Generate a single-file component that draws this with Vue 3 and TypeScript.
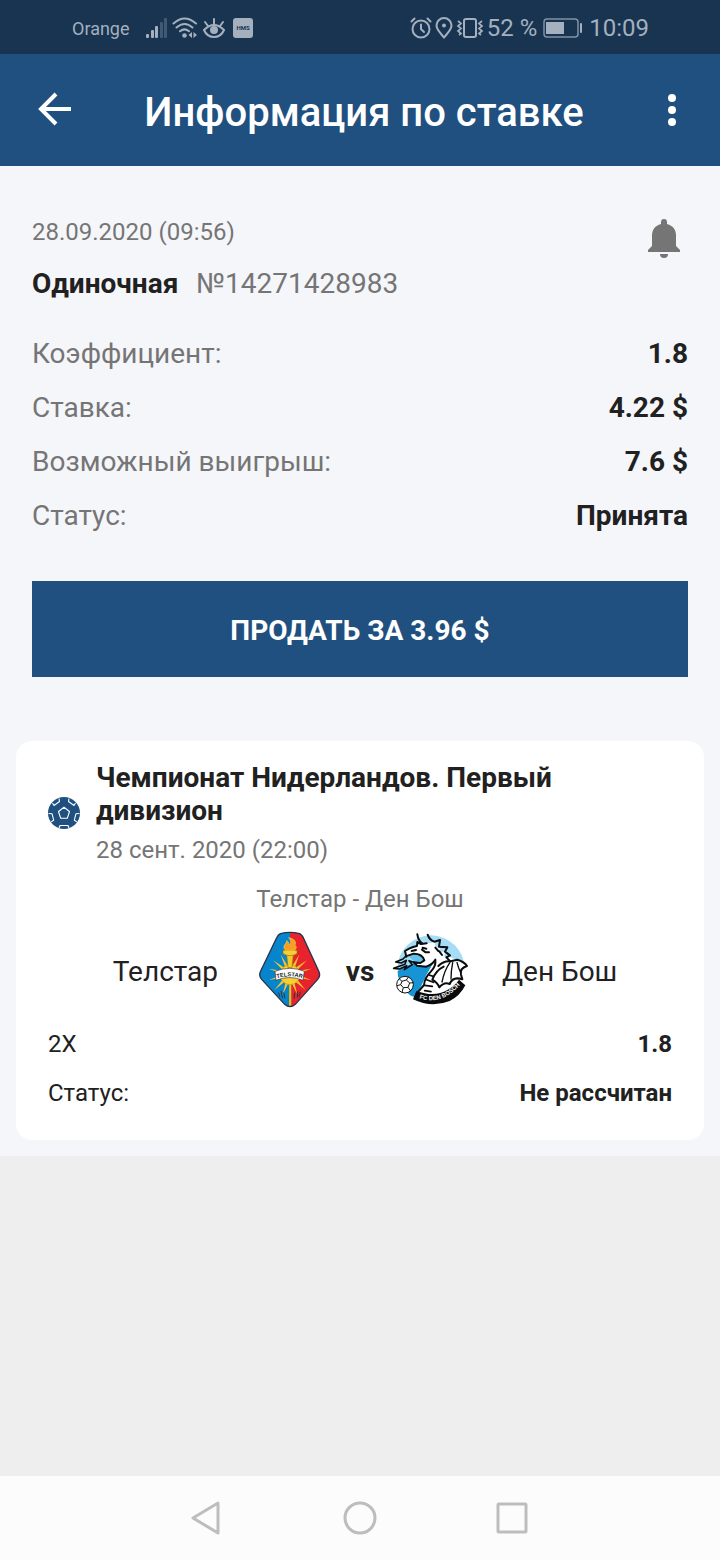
<script setup lang="ts">
interface Row {
  label: string
  value: string
}

const summary: Row[] = [
  { label: 'Коэффициент:', value: '1.8' },
  { label: 'Ставка:', value: '4.22 $' },
  { label: 'Возможный выигрыш:', value: '7.6 $' },
  { label: 'Статус:', value: 'Принята' },
]

const outcome: Row[] = [
  { label: '2X', value: '1.8' },
  { label: 'Статус:', value: 'Не рассчитан' },
]

const rays: number[] = [-75, -50, -25, 25, 50, 75, 105, 135, 160, 200, 225, 255]
</script>

<template>
  <div class="screen">
    <div class="status">
      <div class="status-group">
        <span class="carrier">Orange</span>
        <svg class="signal" width="22" height="22" viewBox="0 0 22 22" aria-hidden="true">
          <g fill="currentColor">
            <rect x="0" y="17" width="3" height="4" rx="1" />
            <rect x="5" y="13" width="3" height="8" rx="1" />
            <rect x="9" y="9" width="3" height="12" rx="1" />
            <g opacity=".3">
              <rect x="14" y="5" width="3" height="16" rx="1" />
              <rect x="18" y="1" width="3" height="20" rx="1" />
            </g>
          </g>
        </svg>
        <svg width="26" height="22" viewBox="0 0 26 22" aria-hidden="true">
          <g fill="none" stroke="currentColor" stroke-width="2" stroke-linecap="round">
            <path d="M1.500 6.500Q12.500-3.500 24 6.500M4.500 10.500Q12.500 3.500 20.500 10.500M8 14.300Q12.500 10.500 17 14.300" />
          </g>
          <circle cx="12.500" cy="18.500" r="2.300" fill="currentColor" />
          <path d="M20 15v6l-3.500-3zM21.500 15v6l3.500-3z" fill="currentColor" />
        </svg>
        <svg width="24" height="22" viewBox="0 0 24 22" aria-hidden="true">
          <g fill="none" stroke="currentColor" stroke-width="2" stroke-linecap="round">
            <path d="M2 13Q12 3 22 13Q19 20 12 20Q5 20 2 13z" />
            <path d="M12 2v5M3 5l3 4M21 5l-3 4" />
          </g>
          <circle cx="12" cy="13" r="4" fill="currentColor" />
        </svg>
        <svg class="hms" width="20" height="20" viewBox="0 0 20 20" aria-hidden="true">
          <rect width="20" height="20" rx="3" fill="currentColor" />
          <text x="10" y="12" text-anchor="middle" class="hms-text">HMS</text>
        </svg>
      </div>
      <div class="status-group right">
        <svg width="22" height="22" viewBox="0 0 22 22" aria-hidden="true">
          <g fill="none" stroke="currentColor" stroke-width="2" stroke-linecap="round">
            <circle cx="11" cy="12" r="8.500" />
            <path d="M11 7.500V12l3 3M1.500 4.500l3-3M17.500 1.500l3 3" />
          </g>
        </svg>
        <svg class="pin" width="18" height="22" viewBox="0 0 18 22" aria-hidden="true">
          <path d="M9 20.500C5 15.500 1.500 12.500 1.500 8.500a7.500 7.500 0 0 1 15 0C16.500 12.500 13 15.500 9 20.500z" fill="none" stroke="currentColor" stroke-width="2" />
          <circle cx="9" cy="8.500" r="2" fill="currentColor" />
        </svg>
        <svg width="28" height="22" viewBox="0 0 28 22" aria-hidden="true">
          <g fill="none" stroke="currentColor">
            <rect x="8" y="2" width="12" height="18" rx="2" stroke-width="2" />
            <path d="M2 4l3 2.500-3 2.500 3 2.500-3 2.500 3 2.500-2 1.500M26 4l-3 2.500 3 2.500-3 2.500 3 2.500-3 2.500 2 1.500" stroke-width="1.700" />
          </g>
        </svg>
        <span class="percent">52 %</span>
        <svg class="battery" width="40" height="20" viewBox="0 0 40 20" aria-hidden="true">
          <rect x="1" y="1" width="34" height="18" rx="3" fill="none" stroke="currentColor" stroke-width="1.500" opacity=".75" />
          <rect x="3" y="4" width="18" height="12" fill="currentColor" />
          <rect x="37" y="5" width="2" height="10" rx="1" fill="currentColor" />
        </svg>
        <span class="clock">10:09</span>
      </div>
    </div>

    <header class="bar">
      <button class="icon-button" type="button" aria-label="Назад">
        <svg width="36" height="36" viewBox="0 0 36 36" aria-hidden="true">
          <path d="M18 2L3 17l15 15M3 17h30" fill="none" stroke="currentColor" stroke-width="4" />
        </svg>
      </button>
      <h1>Информация по ставке</h1>
      <button class="icon-button" type="button" aria-label="Меню">
        <svg width="36" height="36" viewBox="0 0 36 36" aria-hidden="true">
          <g fill="currentColor">
            <circle cx="18" cy="6" r="4" />
            <circle cx="18" cy="18" r="4" />
            <circle cx="18" cy="30" r="4" />
          </g>
        </svg>
      </button>
    </header>

    <main>
      <section class="summary">
        <div class="bet-head">
          <div>
            <div class="date">28.09.2020 (09:56)</div>
            <div class="bet-id"><strong>Одиночная</strong><span>№14271428983</span></div>
          </div>
          <button class="bell" type="button" aria-label="Уведомления">
            <svg width="32" height="40" viewBox="0 0 32 40" aria-hidden="true">
              <path d="M16 0a3 3 0 0 1 3 3v2C25 6.500 28 11 28 16v11l4 4v2H0v-2l4-4V16C4 11 7 6.500 13 5V3a3 3 0 0 1 3-3zM12 35h8a4 4 0 0 1-8 0z" fill="currentColor" />
            </svg>
          </button>
        </div>
        <dl class="rows">
          <div v-for="row in summary" :key="row.label" class="row">
            <dt>{{ row.label }}</dt>
            <dd>{{ row.value }}</dd>
          </div>
        </dl>
        <button class="sell" type="button">ПРОДАТЬ ЗА 3.96 $</button>
      </section>

      <article class="card">
        <div class="league">
          <svg width="32" height="32" viewBox="0 0 32 32" aria-hidden="true">
            <circle cx="16" cy="16" r="16" fill="#20507f" />
            <g fill="none" stroke="#fff" stroke-width="1.100" stroke-linejoin="round">
              <path d="M16 10.300l5.500 4.200-2.100 6.700h-6.800l-2.100-6.700z" />
              <path d="M4.500 6l1.500 2.500 5.500-4L11 1.500M27.500 6L26 8.500l-5.500-4L21 1.500M.500 16.500l3.500.200 1.700 6.500-2.500 1.500M31.500 16.500l-3.500.200-1.700 6.500 2.500 1.500M11 31l1-2.500h8l1 2.500" />
            </g>
          </svg>
          <div class="league-text">
            <h2>Чемпионат Нидерландов. Первый дивизион</h2>
            <div class="date-small">28 сент. 2020 (22:00)</div>
          </div>
        </div>

        <div class="pair">Телстар - Ден Бош</div>

        <div class="match">
          <span class="home">Телстар</span>
          <svg width="88" height="90" viewBox="-12 0 264 270" role="img" aria-label="Телстар">
            <defs>
              <clipPath id="shield">
                <path d="M91 26Q120 18 149 26Q156 30 160 38L207 140Q212 152 203 163L136 238Q120 252 104 238L35 163Q26 152 31 140L80 38Q84 30 91 26z" />
              </clipPath>
            </defs>
            <g clip-path="url(#shield)">
              <rect x="20" y="10" width="100" height="250" fill="#0785cc" />
              <rect x="120" y="10" width="100" height="250" fill="#e8232d" />
              <g fill="#f5c72d">
                <path v-for="a in rays" :key="a" d="M116 120L120 82l4 38z" :transform="`rotate(${a} 120 148)`" />
              </g>
              <path d="M117 165h7v78h-7z" fill="#f0c62a" stroke="#70602a" stroke-width="1" />
              <g stroke="#31343d" stroke-width="3">
                <path d="M85 202l5 14M93 198l5 22M101 202l4 18M134 203l-2 18M142 199l1 19M151 200l-3 16" />
              </g>
            </g>
            <circle cx="120" cy="149" r="30" fill="#f8cf30" stroke="#c49b1e" stroke-width="2" />
            <path d="M110 88h20l-4 40h-12z" fill="#f5ca27" stroke="#8d7420" stroke-width="2" />
            <path d="M99 76h42v10q-21 12-42 0z" fill="#f8cf30" stroke="#8d7420" stroke-width="2" />
            <path d="M106 76C94 60 111 58 110 47c9 5 5 10 8 13 8-7 4-15-2-22 19 4 24 13 18 24 8 0 5 9 0 14z" fill="#f99c22" stroke="#fbd245" stroke-width="2" />
            <path d="M75 139q45-18 88 0l-4 27q-40-17-81 0z" fill="#fff" stroke="#333" stroke-width="2" />
            <path id="ribbon" d="M70 164q49-20 98 0" fill="none" />
            <text class="telstar-text"><textPath href="#ribbon" startOffset="50%" text-anchor="middle">TELSTAR</textPath></text>
            <path d="M91 26Q120 18 149 26Q156 30 160 38L207 140Q212 152 203 163L136 238Q120 252 104 238L35 163Q26 152 31 140L80 38Q84 30 91 26z" fill="none" stroke="#26344a" stroke-width="4" />
          </svg>
          <strong class="versus">vs</strong>
          <svg width="88" height="90" viewBox="3 0 264 270" role="img" aria-label="Ден Бош">
            <defs>
              <clipPath id="disc"><circle cx="138" cy="132" r="101" /></clipPath>
            </defs>
            <g clip-path="url(#disc)">
              <rect x="30" y="25" width="220" height="110" fill="#a5ddf6" />
              <path d="M30 142L72 120L152 100L132 148L98 218L30 200z" fill="#1694d5" />
              <path d="M150 104L186 100L246 118L240 175L180 205L98 205L120 160z" fill="#fff" />
            </g>
            <path d="M152 104L196 96L240 118L226 170L180 202L100 205L118 165z" fill="#fff" />
            <path d="M94 198Q150 218 187 195Q210 182 222 164L241 181Q225 213 194 228Q140 250 84 223z" fill="#080a0c" />
            <path d="M62 80Q59 70 72 71Q83 63 96 63L112 52L128 55L150 52L152 68L165 66L166 80L180 80L178 96L188 100L184 118L156 132L130 166L122 192L104 202L124 150L149 109L122 124Q104 130 90 120L118 108L110 92L88 86L64 94z" fill="#fff" />
            <path d="M70 93Q88 84 106 94L116 106Q106 112 92 112L82 104z" fill="#62c3ec" />
            <g fill="none" stroke="#0a0c0d" stroke-width="6" stroke-linejoin="round" stroke-linecap="round">
              <path d="M64 95L60 78L72 71L84 66L96 63L97 51L108 57L125 55" />
              <path d="M97 28Q100 48 112 55M128 29Q133 45 148 50L165 45L162 65L187 67L180 80L195 91L184 97L196 109L186 121" />
              <path d="M151 68L160 78M163 79L171 90M62 94L86 86Q112 86 118 106L106 114L86 112L96 122L124 125Q143 118 151 104" />
              <path d="M80 78L93 75M111 74L122 82L132 82M113 68L124 71" />
              <path d="M60 96L54 102L32 111L49 114L64 106L60 118L26 130L44 132L65 122L58 134L82 119L72 107L86 112" stroke-width="5" />
              <path d="M151 107Q153 124 138 139Q119 158 117 180L98 202" />
              <path d="M132 150L154 157M125 164L145 172M119 181L142 184M119 197L138 200" stroke-width="5" />
            </g>
            <g stroke="#0a0c0d" stroke-width="6" stroke-linejoin="round" stroke-linecap="round">
              <path d="M160 123Q177 106 197 109L217 104Q238 110 246 123Q224 129 228 149L232 163Q204 153 194 177Q178 169 163 187Q158 174 142 164Q153 136 176 125" fill="#fff" />
              <path d="M195 112Q178 136 171 171M203 113Q198 138 198 162M216 112Q220 129 228 145" fill="none" stroke-width="4" />
            </g>
            <g fill="#fff" stroke="#111" stroke-width="3">
              <circle cx="60" cy="179" r="25" />
              <path d="M51 169l13-4 10 9-5 13-14 1-8-9zM51 169l-9-8M64 165l7-10M74 174l11-1M69 187l8 11M55 188l-4 14M47 179l-11 3" fill="none" />
            </g>
            <path id="bosch-arc" d="M98 219Q172 244 228 176" fill="none" />
            <text class="bosch-text"><textPath href="#bosch-arc" startOffset="50%" text-anchor="middle">FC DEN BOSCH</textPath></text>
          </svg>
          <span class="away">Ден Бош</span>
        </div>

        <dl class="outcome">
          <div v-for="row in outcome" :key="row.label" class="row">
            <dt>{{ row.label }}</dt>
            <dd>{{ row.value }}</dd>
          </div>
        </dl>
      </article>
    </main>

    <nav class="system-nav">
      <button type="button" aria-label="Назад">
        <svg width="36" height="36" viewBox="0 0 36 36" aria-hidden="true">
          <path d="M3 18L28 3v30z" />
        </svg>
      </button>
      <button type="button" aria-label="Домой">
        <svg width="36" height="36" viewBox="0 0 36 36" aria-hidden="true">
          <circle cx="18" cy="18" r="15" />
        </svg>
      </button>
      <button type="button" aria-label="Недавние">
        <svg width="36" height="36" viewBox="0 0 36 36" aria-hidden="true">
          <rect x="4" y="4" width="28" height="28" rx="1" />
        </svg>
      </button>
    </nav>
  </div>
</template>

<style>
body {
  margin: 0;
}
</style>

<style scoped>
* {
  box-sizing: border-box;
}

.screen {
  display: flex;
  flex-direction: column;
  min-height: 100vh;
  background: #eeeeee;
  color: #212121;
  font-family: Roboto, "Liberation Sans", sans-serif;
}

svg {
  display: block;
  flex: none;
}

button {
  border: 0;
  padding: 0;
  background: none;
  color: inherit;
  font-family: inherit;
  cursor: pointer;
}

h1,
h2,
dl,
dd {
  margin: 0;
}

.status {
  display: flex;
  justify-content: space-between;
  padding: 2px 71px 0 72px;
  height: 54px;
  background: #183451;
  color: #a4b0be;
}

.status-group {
  display: flex;
  align-items: center;
  gap: 4px;
}

.status-group.right {
  gap: 3px;
}

.carrier {
  font-size: 18px;
}

.signal {
  margin-left: 12px;
}

.hms {
  margin-left: 3px;
}

.hms-text {
  fill: #183451;
  font-size: 6px;
  font-weight: 700;
}

.percent,
.clock {
  font-size: 24px;
}

.battery {
  margin: 0 3px;
}

.bar {
  display: flex;
  align-items: center;
  justify-content: space-between;
  padding: 0 30px 0 38px;
  height: 112px;
  background: #20507f;
  color: #fff;
}

.bar h1 {
  padding-top: 6px;
  font-size: 40px;
  font-weight: 500;
  line-height: 48px;
}

.summary {
  padding: 48px 32px 64px;
}

main {
  padding-bottom: 16px;
  background: #f5f6fa;
}

.bet-head {
  display: flex;
  justify-content: space-between;
  align-items: flex-start;
}

.date {
  color: #757575;
  font-size: 24px;
  line-height: 36px;
}

.bet-id {
  display: flex;
  gap: 18px;
  margin-top: 16px;
  font-size: 28px;
  line-height: 36px;
}

.bet-id span {
  color: #757575;
}

.bell {
  margin: 5px 8px 0 0;
  color: #757575;
}

.rows {
  margin: 25px 0 38px;
  font-size: 28px;
  line-height: 54px;
}

.row {
  display: flex;
  justify-content: space-between;
}

.rows dt {
  color: #757575;
}

dd {
  font-weight: 700;
}

.sell {
  width: 100%;
  height: 96px;
  padding-top: 2px;
  background: #20507f;
  color: #fff;
  font-size: 28px;
  font-weight: 700;
}

.card {
  margin: 0 16px;
  padding: 20px 32px 33px;
  border-radius: 16px;
  background: #fff;
}

.league {
  display: flex;
  align-items: center;
  gap: 16px;
}

.league h2 {
  font-size: 28px;
  font-weight: 700;
  line-height: 33px;
}

.date-small {
  margin-top: 9px;
  color: #757575;
  font-size: 24px;
  line-height: 28px;
}

.league-text {
  max-width: 500px;
}

.pair {
  margin: 21px 0 12px;
  color: #757575;
  font-size: 24px;
  line-height: 28px;
  text-align: center;
}

.match {
  display: grid;
  grid-template-columns: 1fr 88px 52px 88px 1fr;
  align-items: center;
  font-size: 28px;
}

.home,
.away,
.versus {
  padding-top: 2px;
}

.home {
  padding-right: 28px;
  text-align: right;
}

.away {
  padding-left: 28px;
}

.versus {
  text-align: center;
}

.telstar-text {
  fill: #222;
  font-family: "Liberation Sans", sans-serif;
  font-size: 17px;
  font-weight: 700;
}

.bosch-text {
  fill: #fff;
  font-family: "Liberation Sans", sans-serif;
  font-size: 18px;
  font-weight: 700;
}

.outcome {
  display: grid;
  gap: 21px;
  margin-top: 15px;
  font-size: 24px;
  line-height: 28px;
}

.system-nav {
  display: flex;
  justify-content: center;
  align-items: center;
  gap: 116px;
  margin-top: auto;
  height: 84px;
  background: #fcfcfc;
  color: #bdbdbd;
}

.system-nav svg {
  fill: none;
  stroke: currentColor;
  stroke-width: 3;
  stroke-linejoin: round;
}
</style>
